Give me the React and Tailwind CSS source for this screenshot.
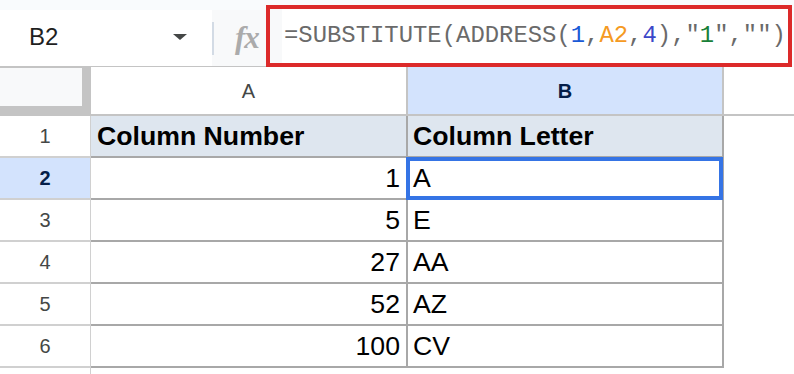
const ROWS = [
  { n: 1, a: 'Column Number', b: 'Column Letter', head: true },
  { n: 2, a: '1', b: 'A', sel: true },
  { n: 3, a: '5', b: 'E' },
  { n: 4, a: '27', b: 'AA' },
  { n: 5, a: '52', b: 'AZ' },
  { n: 6, a: '100', b: 'CV' },
]

const cellFont = { fontFamily: '"Liberation Sans", Arial, sans-serif' }

function FormulaBar() {
  return (
    <div className="flex h-[67px] bg-[#f9fbfd]">
      <div className="flex h-full w-[266px] items-end border-b border-[#c4c4c4]">
        <div className="flex h-[56px] w-[212px] items-center bg-white pb-[3px] pl-[29px] pr-[25px]">
          <span className="flex-1 text-[24px] text-[#1f1f1f]" style={cellFont}>B2</span>
          <span className="h-0 w-0 border-x-[7px] border-t-[6px] border-x-transparent border-t-[#444746]" />
        </div>
        <div className="flex h-[56px] w-[54px] items-center bg-[#f8f9fa]">
          <div className="h-[33px] w-[2px] bg-[#d3dbe5]" />
          <span
            className="ml-[21px] pb-[2px] text-[31px] font-bold italic leading-none tracking-[-1px] text-[#ababab]"
            style={{ fontFamily: '"Liberation Serif", "Times New Roman", serif' }}
          >
            fx
          </span>
        </div>
      </div>
      <div className="mt-[5px] flex h-[62px] w-[526px] border-[4px] border-[#dc2a2a]">
        <div className="w-[12px] bg-[#f8f9fa]" />
        <div
          className="flex flex-1 items-center bg-white pl-[2px] text-[23.9px] text-[#6a6a6a]"
          style={{ fontFamily: '"Liberation Mono", "Courier New", monospace' }}
        >
          =SUBSTITUTE(ADDRESS(<span className="text-[#1a5ad6]">1</span>,
          <span className="text-[#f59a23]">A2</span>,<span className="text-[#3b47c9]">4</span>),"
          <span className="text-[#188038]">1</span>",""{')'}
        </div>
      </div>
    </div>
  )
}

function HeaderRow() {
  return (
    <div className="flex h-[49px]">
      <div className="w-[91px] bg-[#c4c4c4] pt-[1px]">
        <div className="h-[38px] w-[82px] bg-[#f8f9fa]" />
      </div>
      <div
        className="flex w-[317px] items-center justify-center border-b-2 border-r-2 border-[#c4c4c4] bg-white text-[20px] text-[#444746]"
        style={cellFont}
      >
        A
      </div>
      <div
        className="flex w-[316px] items-center justify-center border-b-2 border-r-2 border-[#c4c4c4] bg-[#d3e3fd] text-[20px] font-bold text-[#041e49]"
        style={cellFont}
      >
        B
      </div>
      <div className="flex-1 border-b-2 border-[#c4c4c4] bg-white" />
    </div>
  )
}

function DataRow({ r }) {
  const bg = r.head ? 'bg-[#dee6ef]' : 'bg-white'
  return (
    <div className="flex h-[42px]">
      <div
        className={`flex w-[91px] items-center justify-center border-b-2 border-r border-[#d0d0d0] text-[20px] ${
          r.sel ? 'bg-[#d3e3fd] font-bold text-[#041e49]' : 'bg-white text-[#444746]'
        }`}
        style={cellFont}
      >
        {r.n}
      </div>
      <div
        className={`flex w-[317px] items-end border-b-2 border-r-2 border-[#a8a8a8] pb-[5px] text-[26.67px] leading-[30px] text-black ${bg} ${
          r.head ? 'justify-start pl-[6px] font-bold' : 'justify-end pr-[6px]'
        }`}
        style={cellFont}
      >
        {r.a}
      </div>
      <div
        className={`relative flex w-[316px] items-end border-b-2 border-r-2 border-[#a8a8a8] pb-[5px] pl-[5px] text-[26.67px] leading-[30px] text-black ${bg} ${
          r.head ? 'font-bold' : ''
        }`}
        style={cellFont}
      >
        {r.b}
        {r.sel && (
          <div className="absolute -left-[2px] -top-[1px] h-[43px] w-[317px] border-[4px] border-[#3574e5]" />
        )}
      </div>
      <div className="flex-1 bg-white" />
    </div>
  )
}

export default function App() {
  return (
    <div className="h-[374px] w-[794px] overflow-hidden bg-white">
      <FormulaBar />
      <HeaderRow />
      {ROWS.map((r) => (
        <DataRow key={r.n} r={r} />
      ))}
      <div className="flex h-[10px]">
        <div className="w-[91px] border-r border-[#d0d0d0]" />
      </div>
    </div>
  )
}
